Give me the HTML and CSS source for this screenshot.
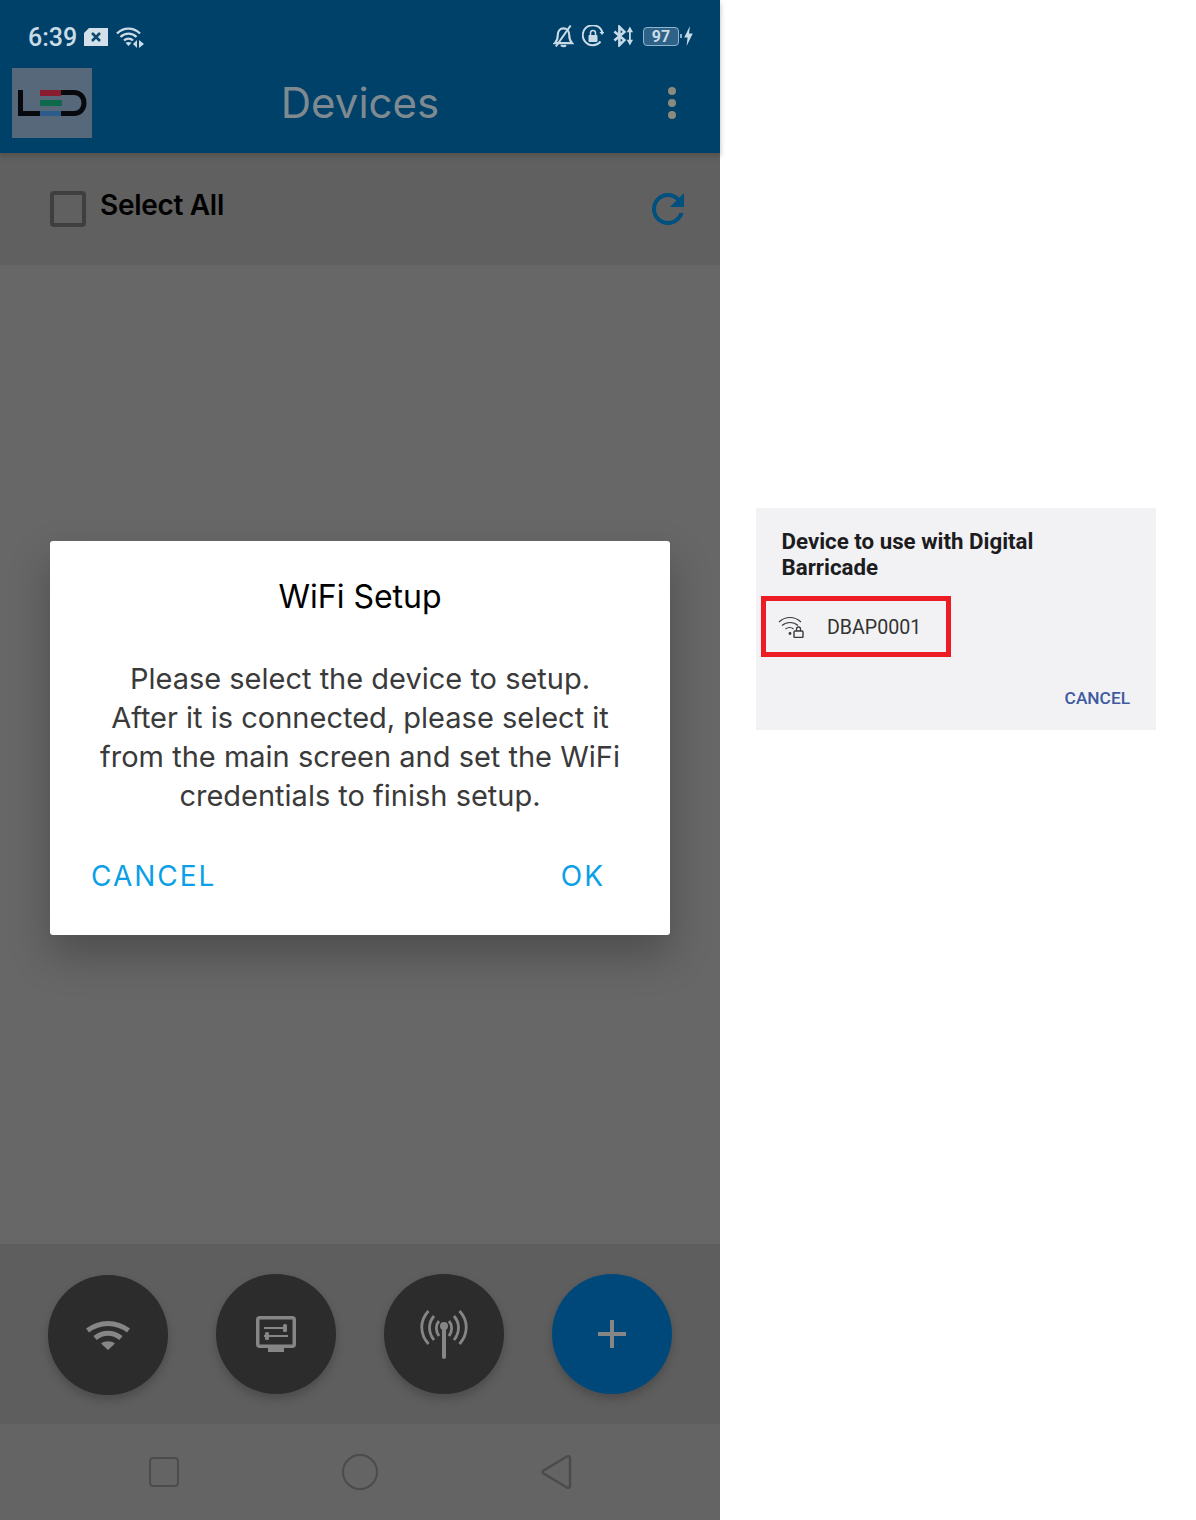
FILE: index.html
```html
<!DOCTYPE html>
<html lang="en">
<head>
    <meta charset="UTF-8">
    <meta name="viewport" content="width=device-width, initial-scale=1.0">
    <title>Devices</title>
    <link rel="stylesheet" href="styles.css">
</head>
<body>
    <div class="page">
        <div class="phone">
            <div class="appbar">
                <div class="statusbar">
                    <div class="status-left">
                        <span class="clock">6:39</span>
                        <svg class="ic-sim" viewBox="0 0 24 18"><path d="M5 0H24V18H0V5Z" fill="#d3e0e9"/><path d="M8 5l8 8M16 5l-8 8" stroke="#0c466d" stroke-width="2.500"/></svg>
                        <svg class="ic-wifi-small" viewBox="0 0 29 22" fill="none" stroke="#c9dbe7" stroke-width="2.400"><path d="M1 7.500C7.500 1 17.500 1 24 7.500"/><path d="M4.500 11C9 6.500 16 6.500 20.500 11"/><path d="M8 14.500C10.500 12 14.500 12 17 14.500"/><path d="M12.500 20l-3-3.200c1.800-1.200 4.200-1.200 6 0z" fill="#c9dbe7" stroke="none"/><path d="M21 14v8l-4-4zM23 14l5 4-5 4z" fill="#c9dbe7" stroke="none"/></svg>
                    </div>
                    <div class="status-right">
                        <svg class="ic-bell" viewBox="0 0 22 24" fill="none" stroke="#c9dbe7" stroke-width="2.200"><path d="M2 19.500h18c-2.500-2.500-3-5-3-8.500 0-4-2.500-7-6-7s-6 3-6 7c0 3.500-.5 6-3 8.500z"/><path d="M8.500 21.500c.8 1.500 4 1.500 5 0"/><path d="M18.500 1L3 23"/></svg>
                        <svg class="ic-rotate" viewBox="0 0 22 22" fill="none"><path d="M18.500 16.500A10 10 0 1 1 20.500 8" stroke="#c9dbe7" stroke-width="2"/><path d="M17.500 7h5l-2.500 3z" fill="#c9dbe7"/><rect x="6.500" y="10" width="9" height="7" rx="1" fill="#c9dbe7"/><path d="M8.500 10V8a2.500 2.500 0 0 1 5 0v2" stroke="#c9dbe7" stroke-width="1.500"/></svg>
                        <svg class="ic-bt" viewBox="0 0 23 22" fill="none" stroke="#c9dbe7" stroke-width="2.800"><path d="M1.500 6l11 9.500L7 21V1l5.500 5.500L1.500 16"/><path d="M18.500 2v18" stroke-width="2"/><path d="M15 7l3.500-6 3.500 6zM15 15l3.500 6 3.500-6z" fill="#c9dbe7" stroke="none"/></svg>
                        <div class="battery"><span class="battery-level">97</span></div>
                        <span class="battery-tip"></span>
                        <svg class="ic-bolt" viewBox="0 0 9 21"><path d="M6 0L0 12h3.500L2.500 21 9 8H5z" fill="#c9dbe7"/></svg>
                    </div>
                </div>
                <div class="toolbar">
                    <div class="logo">
                        <svg viewBox="0 0 80 70" width="80" height="70">
                            <path d="M8.500 22v23.500H28" fill="none" stroke="#07090f" stroke-width="5"/>
                            <rect x="28" y="22" width="21" height="6" fill="#8a1c2f"/>
                            <rect x="28" y="32" width="22" height="6" fill="#0f6a4c"/>
                            <rect x="28" y="43" width="21" height="5" fill="#2b5c8a"/>
                            <path d="M49 24.500h13c6 0 10 4.500 10 10.500s-4 10.500-10 10.500H49" fill="none" stroke="#07090f" stroke-width="5"/>
                        </svg>
                    </div>
                    <h1 class="title">Devices</h1>
                    <div class="kebab"><span></span><span></span><span></span></div>
                </div>
            </div>

            <div class="select-row">
                <label class="select-all"><span class="checkbox"></span><span class="select-text">Select All</span></label>
                <svg class="ic-refresh" viewBox="4 4 16 16"><path d="M17.650 6.350C16.200 4.900 14.210 4 12 4c-4.420 0-7.990 3.580-7.990 8s3.570 8 7.990 8c3.730 0 6.840-2.550 7.730-6h-2.080c-.82 2.330-3.040 4-5.650 4-3.310 0-6-2.690-6-6s2.690-6 6-6c1.660 0 3.140.69 4.220 1.780L13 11h7V4l-2.350 2.350z" fill="#00507f"/></svg>
            </div>

            <div class="device-list"></div>

            <div class="actions">
                <button class="fab fab-wifi">
                    <svg width="44" height="32" viewBox="0 0 44 32" fill="none" stroke="#868686" stroke-width="5"><path d="M1.500 11.500c12-9.500 29-9.500 41 0"/><path d="M9 19c8-6.500 18-6.500 26 0"/><path d="M22 31l-7-6.500c4-3 10-3 14 0z" fill="#868686" stroke="none"/></svg>
                </button>
                <button class="fab">
                    <svg width="40" height="36" viewBox="0 0 40 36" fill="none"><rect x="1.750" y="1.750" width="36.500" height="28.500" rx="2" stroke="#868686" stroke-width="3.500"/><rect x="12" y="30" width="16" height="6" fill="#868686"/><path d="M8 12h19M13 20h19M8 20h2" stroke="#868686" stroke-width="2.200"/><rect x="27" y="8" width="4" height="8" rx="1.500" fill="#868686"/><rect x="9" y="16" width="4" height="8" rx="1.500" fill="#868686"/></svg>
                </button>
                <button class="fab">
                    <svg width="48" height="50" viewBox="0 0 48 50" fill="none" stroke="#868686" stroke-width="2.800"><path d="M8.500 2c-9 9.500-9 23 0 33M39.500 2c9 9.500 9 23 0 33"/><path d="M14 7c-6 7-6 16 0 24M34 7c6 7 6 16 0 24"/><path d="M19 12c-3.500 4-3.500 10 0 15M29 12c3.500 4 3.500 10 0 15"/><path d="M24 17v31" stroke-width="4" stroke-linecap="round"/><circle cx="24" cy="17" r="4" fill="#868686" stroke="none"/></svg>
                </button>
                <button class="fab fab-add">
                    <svg width="30" height="30" viewBox="0 0 30 30"><path d="M15 1v28M1 15h28" stroke="#868686" stroke-width="4"/></svg>
                </button>
            </div>

            <div class="navbar">
                <span class="nav-square"></span>
                <span class="nav-circle"></span>
                <svg class="nav-back" width="32" height="36" viewBox="0 0 32 36" fill="none"><path d="M3.500 16.500L27 2.500c1.500-.8 3-.2 3 1.500v28c0 1.700-1.500 2.300-3 1.500L3.500 19.500c-1.300-.8-1.300-2.200 0-3z" stroke="#4b4b4b" stroke-width="2.500" stroke-linejoin="round"/></svg>
            </div>

            <div class="dialog">
                <h2 class="dialog-title">WiFi Setup</h2>
                <p class="dialog-text">Please select the device to setup.<br>After it is connected, please select it<br>from the main screen and set the WiFi<br>credentials to finish setup.</p>
                <div class="dialog-buttons">
                    <span class="dialog-btn">CANCEL</span>
                    <span class="dialog-btn">OK</span>
                </div>
            </div>
        </div>

        <div class="side">
            <div class="picker">
                <h3 class="picker-title">Device to use with Digital<br>Barricade</h3>
                <div class="picker-item">
                    <svg width="26" height="22" viewBox="0 0 26 22" fill="none" stroke="#3a3a3a" stroke-width="1.100"><path d="M1 6c6.500-6 15.500-6 22 0"/><path d="M4 9.500c4.500-4 11.500-4 16 0"/><path d="M7.500 13c2.500-2 6-2 8 0"/><circle cx="12" cy="17.500" r="1.400" fill="#3a3a3a" stroke="none"/><rect x="16" y="15" width="9" height="6.500" rx="1" stroke-width="1.400"/><path d="M18.500 15v-2a2 2 0 0 1 4 0v2" stroke-width="1.300"/></svg>
                    <span class="picker-name">DBAP0001</span>
                </div>
                <div class="picker-footer"><span class="picker-cancel">CANCEL</span></div>
            </div>
        </div>
    </div>
</body>
</html>
```

FILE: styles.css
```css
html, body {
    margin: 0;
    padding: 0;
    background-color: #fff;
}
.page {
    display: flex;
    width: 1196px;
    height: 1520px;
    overflow: hidden;
}

/* left: phone screenshot with dimmed app */
.phone {
    position: relative;
    width: 720px;
    height: 1520px;
    display: flex;
    flex-direction: column;
    background-color: #676767;
    font-family: 'Inter', sans-serif;
}
.appbar {
    height: 153px;
    background-color: #00416a;
    box-shadow: 0 3px 5px rgba(60, 50, 40, 0.35);
    position: relative;
    z-index: 1;
}
.statusbar {
    height: 68px;
    padding: 6px 27px 0 28px;
    display: flex;
    justify-content: space-between;
    align-items: center;
    box-sizing: border-box;
}
.status-left, .status-right {
    display: flex;
    align-items: center;
}
.status-right {
    padding-bottom: 2px;
}
.clock {
    font-family: 'Roboto', sans-serif;
    font-size: 25px;
    font-weight: 500;
    color: #c9dbe7;
    margin-right: 7px;
}
.ic-sim { width: 24px; height: 18px; margin-right: 8px; }
.ic-wifi-small { width: 29px; height: 22px; }
.ic-bell { width: 21px; height: 24px; margin-right: 8px; }
.ic-rotate { width: 22px; height: 22px; margin-right: 9px; }
.ic-bt { width: 21px; height: 22px; margin-right: 9px; }
.battery {
    width: 34px;
    height: 17px;
    border: 1.500px solid #8fb4cf;
    border-radius: 4px;
    background-color: #2f6287;
    display: flex;
    align-items: center;
    justify-content: center;
}
.battery-level {
    font-family: 'Roboto', sans-serif;
    font-size: 16px;
    font-weight: 700;
    color: #c9dbe7;
}
.battery-tip {
    width: 2px;
    height: 4px;
    margin: 0 2px 0 1px;
    background-color: #8fb4cf;
}
.ic-bolt { width: 9px; height: 20px; }

.toolbar {
    position: relative;
    height: 85px;
    display: flex;
    align-items: center;
    justify-content: center;
}
.logo {
    position: absolute;
    left: 12px;
    top: 0;
    width: 80px;
    height: 70px;
    background-color: #56687a;
}
.logo svg { display: block; }
.title {
    margin: 0 0 16px;
    font-family: 'Inter', sans-serif;
    font-size: 42px;
    font-weight: 400;
    color: #7f8a90;
}
.kebab {
    position: absolute;
    left: 668px;
    top: 19px;
    display: flex;
    flex-direction: column;
    gap: 4px;
}
.kebab span {
    width: 8px;
    height: 8px;
    border-radius: 50%;
    background-color: #8a8a7e;
}

.select-row {
    height: 112px;
    background-color: #606060;
    display: flex;
    justify-content: space-between;
    padding: 38px 36px 0 50px;
    box-sizing: border-box;
}
.select-all {
    display: flex;
    height: 36px;
}
.checkbox {
    width: 36px;
    height: 36px;
    box-sizing: border-box;
    border: 4px solid #3f3f3f;
    border-radius: 4px;
}
.select-text {
    margin-left: 14px;
    font-size: 28px;
    font-weight: 600;
    letter-spacing: -0.3px;
    color: #000;
    line-height: 28px;
}
.ic-refresh { width: 32px; height: 32px; margin-top: 2px; }

.device-list {
    flex: 1;
}

.actions {
    height: 180px;
    background-color: #5e5e5e;
    padding: 30px 48px 0;
    box-sizing: border-box;
    display: flex;
    gap: 48px;
}
.fab {
    width: 120px;
    height: 120px;
    padding: 0;
    border: none;
    border-radius: 50%;
    background-color: #2c2c2c;
    box-shadow: 0 5px 10px rgba(0, 0, 0, 0.2);
    display: flex;
    align-items: center;
    justify-content: center;
}
.fab-wifi { margin-top: 1px; }
.fab-add { background-color: #00487a; }

.navbar {
    height: 96px;
    background-color: #646464;
    display: flex;
    align-items: center;
    justify-content: center;
}
.nav-square {
    width: 30px;
    height: 30px;
    box-sizing: border-box;
    border: 2.500px solid #4b4b4b;
    border-radius: 4px;
    margin-right: 163px;
}
.nav-circle {
    width: 36px;
    height: 36px;
    box-sizing: border-box;
    border: 2.500px solid #4b4b4b;
    border-radius: 50%;
    margin-right: 162px;
}

.dialog {
    position: absolute;
    left: 50px;
    top: 541px;
    width: 620px;
    height: 394px;
    box-sizing: border-box;
    background-color: #fff;
    border-radius: 3px;
    box-shadow: 0 20px 40px rgba(0, 0, 0, 0.25);
    z-index: 2;
    text-align: center;
    padding-top: 35px;
}
.dialog-title {
    margin: 0;
    font-size: 32px;
    line-height: 42px;
    font-weight: 400;
    color: #000;
}
.dialog-text {
    margin: 41px 0 0;
    font-size: 29px;
    line-height: 39px;
    color: #3a3a3a;
}
.dialog-buttons {
    display: flex;
    justify-content: space-between;
    padding: 0 65px 0 41px;
    margin-top: 41px;
}
.dialog-btn {
    font-size: 28px;
    line-height: 40px;
    letter-spacing: 2px;
    color: #0a9fe6;
}

/* right: cropped chooser dialog */
.side {
    padding: 508px 0 0 36px;
}
.picker {
    width: 400px;
    height: 222px;
    box-sizing: border-box;
    background-color: #f2f2f5;
    padding: 20px 26px 0 25.500px;
    font-family: 'Roboto', sans-serif;
}
.picker-title {
    margin: 0;
    font-size: 22.300px;
    line-height: 26px;
    font-weight: 700;
    color: #1c1c1e;
}
.picker-item {
    width: 190px;
    height: 61px;
    box-sizing: border-box;
    margin: 16px 0 0 -20.500px;
    border: 5px solid #ed1c24;
    display: flex;
    align-items: center;
    padding-left: 12px;
}
.picker-name {
    margin: 2px 0 0 23px;
    font-size: 19.600px;
    color: #333;
}
.picker-footer {
    display: flex;
    justify-content: flex-end;
    margin-top: 31px;
}
.picker-cancel {
    font-size: 17.300px;
    font-weight: 500;
    color: #3f5a9f;
}
```
